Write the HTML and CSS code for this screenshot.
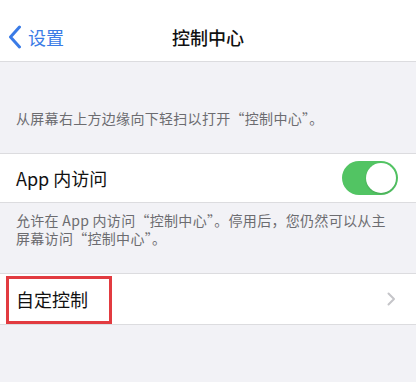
FILE: index.html
```html
<!DOCTYPE html>
<html lang="zh-CN">
<head>
<meta charset="utf-8">
<link rel="stylesheet" href="styles.css">
</head>
<body>
<header class="nav">
  <a class="back">
    <svg class="back-icon" width="14" height="24" viewBox="0 0 14 24"><path d="M11.5 2 L2.5 12 L11.5 22" fill="none" stroke="#3a7be6" stroke-width="3" stroke-linecap="round" stroke-linejoin="round"/></svg>
    <span>设置</span>
  </a>
  <h1 class="title">控制中心</h1>
</header>
<main>
  <p class="note top-note">从屏幕右上方边缘向下轻扫以打开“控制中心”。</p>
  <div class="cell">
    <span class="label">App 内访问</span>
    <span class="toggle"><span class="knob"></span></span>
  </div>
  <p class="note foot-note">允许在 App 内访问“控制中心”。停用后，您仍然可以从主屏幕访问“控制中心”。</p>
  <div class="cell cell-link">
    <span class="label">自定控制</span>
    <svg class="chevron" width="9" height="14" viewBox="0 0 9 14"><path d="M1.5 1.5 L7 7 L1.5 12.5" fill="none" stroke="#c5c5c9" stroke-width="2" stroke-linecap="round" stroke-linejoin="round"/></svg>
    <span class="highlight"></span>
  </div>
</main>
</body>
</html>
```
FILE: styles.css
```css
* { box-sizing: border-box; }
html, body {
  margin: 0;
  padding: 0;
  background: #f2f2f6;
  font-family: "Noto Sans CJK SC", "Noto Sans", sans-serif;
  width: 416px;
  height: 382px;
  overflow: hidden;
}
.nav {
  height: 62px;
  background: #fff;
  border-bottom: 1px solid #dcdcdf;
  display: flex;
  align-items: center;
  justify-content: center;
  position: relative;
}
.back {
  position: absolute;
  left: 8px;
  top: 25px;
  display: flex;
  align-items: center;
  gap: 6px;
  color: #3a7be6;
  font-size: 18px;
  line-height: 24px;
}
.back-icon { display: block; }
.title {
  margin: 0;
  font-size: 18px;
  font-weight: 500;
  color: #111;
  line-height: 24px;
  padding-top: 13px;
}
main { display: flex; flex-direction: column; }
.note {
  margin: 0;
  padding: 0 16px;
  font-size: 14px;
  letter-spacing: 0.3px;
  line-height: 18px;
  color: #6c6c70;
}
.top-note { padding-top: 47px; padding-bottom: 26px; }
.foot-note { padding-top: 8px; padding-bottom: 26px; padding-right: 28px; }
.cell {
  background: #fff;
  border-top: 1px solid #dcdcdf;
  border-bottom: 1px solid #dcdcdf;
  height: 50px;
  display: flex;
  align-items: center;
  justify-content: space-between;
  padding: 0 18px 0 16px;
  position: relative;
}
.cell-link { height: 52px; padding-right: 20px; }
.label {
  font-size: 18px;
  color: #111;
  line-height: 24px;
}
.toggle {
  width: 56px;
  height: 34px;
  border-radius: 17px;
  background: #52c463;
  display: flex;
  justify-content: flex-end;
  align-items: center;
  padding: 2px;
}
.knob {
  width: 30px;
  height: 30px;
  border-radius: 50%;
  background: #fff;
  box-shadow: 0 1px 2px rgba(0,0,0,0.15);
}
.chevron { display: block; }
.highlight {
  position: absolute;
  left: 6px;
  top: 2px;
  width: 106px;
  height: 48px;
  border: 3px solid #e23b40;
}
```
